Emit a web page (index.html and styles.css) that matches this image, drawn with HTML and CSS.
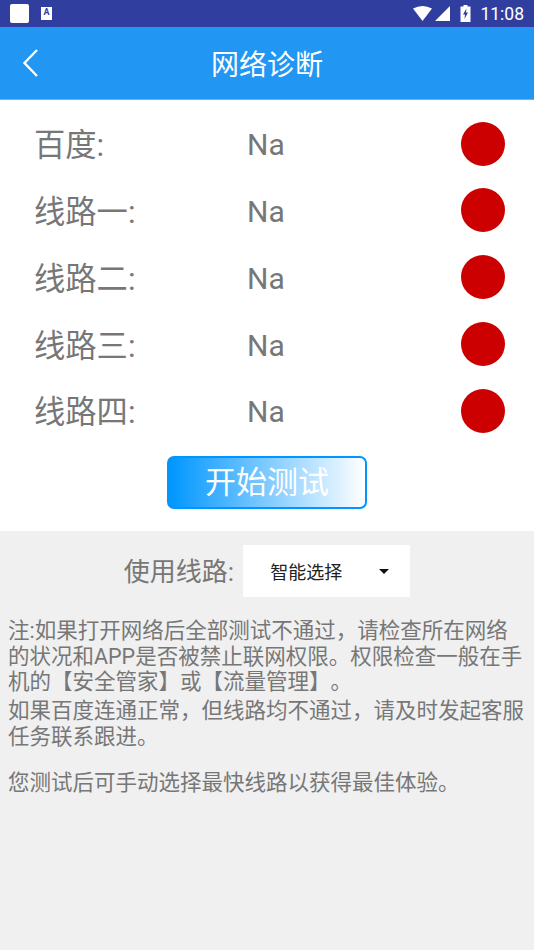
FILE: index.html
```html
<!DOCTYPE html>
<html>
<head>
    <title>网络诊断</title>
    <meta charset="UTF-8">
    <meta name="viewport" content="width=device-width, initial-scale=1.0">
    <link rel="stylesheet" href="styles.css">
</head>
<body>
    <div class="statusbar">
        <div class="status-left">
            <span class="notify-square"></span>
            <span class="notify-a">A</span>
        </div>
        <div class="status-right">
            <svg class="icon-wifi" width="19" height="15" viewBox="0 0 19 15"><path d="M0 2.5 Q9.5 -2.5 19 2.5 L9.5 15 Z" fill="#fff"/></svg>
            <svg class="icon-signal" width="15" height="15" viewBox="0 0 15 15"><path d="M15 0 V15 H0 Z" fill="#fff"/></svg>
            <svg class="icon-battery" width="11" height="17" viewBox="0 0 11 17"><path d="M3.5 0 H7.5 V1.5 H10.5 V17 H0.5 V1.5 H3.5 Z" fill="#fff"/><path d="M6.5 3.5 L3 9.5 H5 L4.5 14 L8 7.5 H6 Z" fill="#303f9f"/></svg>
            <span class="clock">11:08</span>
        </div>
    </div>

    <div class="titlebar">
        <svg class="back" width="18" height="30" viewBox="0 0 18 30"><path d="M16 2 L3.5 15 L16 28" fill="none" stroke="#fff" stroke-width="2.4"/></svg>
        <h1>网络诊断</h1>
    </div>

    <div class="panel">
        <div class="line-row">
            <span class="line-name">百度:</span>
            <span class="line-value">Na</span>
            <span class="dot"></span>
        </div>
        <div class="line-row">
            <span class="line-name">线路一:</span>
            <span class="line-value">Na</span>
            <span class="dot"></span>
        </div>
        <div class="line-row">
            <span class="line-name">线路二:</span>
            <span class="line-value">Na</span>
            <span class="dot"></span>
        </div>
        <div class="line-row">
            <span class="line-name">线路三:</span>
            <span class="line-value">Na</span>
            <span class="dot"></span>
        </div>
        <div class="line-row">
            <span class="line-name">线路四:</span>
            <span class="line-value">Na</span>
            <span class="dot"></span>
        </div>
        <div class="btn-wrap">
            <div class="start-btn">开始测试</div>
        </div>
    </div>

    <div class="lower">
        <div class="picker-row">
            <span class="picker-label">使用线路:</span>
            <div class="picker">
                <span>智能选择</span>
                <span class="caret"></span>
            </div>
        </div>
        <div class="notes">
            <p>注:如果打开网络后全部测试不通过，请检查所在网络的状况和APP是否被禁止联网权限。权限检查一般在手机的【安全管家】或【流量管理】。</p>
            <p>如果百度连通正常，但线路均不通过，请及时发起客服任务联系跟进。</p>
            <p class="tip">您测试后可手动选择最快线路以获得最佳体验。</p>
        </div>
    </div>
</body>
</html>
```

FILE: styles.css
```css
* {
    box-sizing: border-box;
}
html, body {
    margin: 0;
    height: 100%;
}
body {
    width: 534px;
    height: 950px;
    overflow: hidden;
    display: flex;
    flex-direction: column;
    background: #f0f0f0;
    font-family: Roboto, "Noto Sans CJK SC", sans-serif;
}
.statusbar {
    height: 27px;
    background: #303f9f;
    display: flex;
    justify-content: space-between;
    align-items: center;
    padding: 0 10px 0 10px;
}
.status-left {
    display: flex;
    align-items: center;
    gap: 12px;
}
.notify-square {
    width: 19px;
    height: 19px;
    background: #fff;
    border-radius: 2px;
}
.notify-a {
    width: 11px;
    height: 13px;
    background: #fff;
    color: #303f9f;
    font-size: 9px;
    font-weight: 700;
    line-height: 11px;
    text-align: center;
}
.status-right {
    display: flex;
    align-items: center;
}
.icon-signal {
    margin-left: 3px;
}
.icon-battery {
    margin-left: 10px;
}
.clock {
    margin-left: 9px;
    color: #fff;
    font-size: 17.5px;
}
.titlebar {
    height: 73px;
    background: #2196f3;
    border-bottom: 1px solid #64b5f6;
    display: flex;
    align-items: center;
    justify-content: center;
    position: relative;
}
.titlebar h1 {
    margin: 0;
    color: #fff;
    font-size: 28px;
    font-weight: 400;
}
.back {
    position: absolute;
    left: 21px;
    top: 21px;
}
.panel {
    background: #fff;
    height: 431px;
    padding: 21px 29px 0 34px;
}
.line-row {
    height: 45px;
    margin-bottom: 21.85px;
    display: flex;
    align-items: center;
    color: #777;
    font-size: 30px;
}
.line-name {
    width: 213px;
    font-size: 31.3px;
    position: relative;
    top: -1px;
}
.line-value {
    flex: 1;
    position: relative;
    top: 1px;
}
.dot {
    width: 44px;
    height: 44px;
    border-radius: 50%;
    background: #cc0000;
}
.btn-wrap {
    display: flex;
    justify-content: center;
}
.start-btn {
    width: 200px;
    height: 53px;
    margin: 1px 0 0 -5px;
    border: 2px solid #0096ff;
    border-radius: 7px;
    background: linear-gradient(to right, #0096ff, #ffffff);
    color: #fff;
    font-size: 31px;
    line-height: 49px;
    text-align: center;
}
.lower {
    flex: 1;
    padding: 14px 6px 0 8px;
}
.picker-row {
    display: flex;
    align-items: center;
    justify-content: center;
    gap: 9px;
    height: 52px;
    padding-right: 2px;
}
.picker-label {
    color: #777;
    font-size: 26px;
    position: relative;
    top: -2px;
}
.picker {
    width: 167px;
    height: 52px;
    background: #fff;
    display: flex;
    align-items: center;
    justify-content: space-between;
    padding: 0 21px 0 27px;
    color: #222;
    font-size: 18px;
}
.caret {
    width: 0;
    height: 0;
    border-left: 5.5px solid transparent;
    border-right: 5.5px solid transparent;
    border-top: 5.5px solid #111;
}
.notes {
    margin-top: 21px;
    color: #777;
    font-size: 21.5px;
    line-height: 25.5px;
    text-spacing-trim: space-all;
}
.notes p {
    margin: 0 0 3.5px;
}
.notes .tip {
    margin-top: 21px;
}
```
